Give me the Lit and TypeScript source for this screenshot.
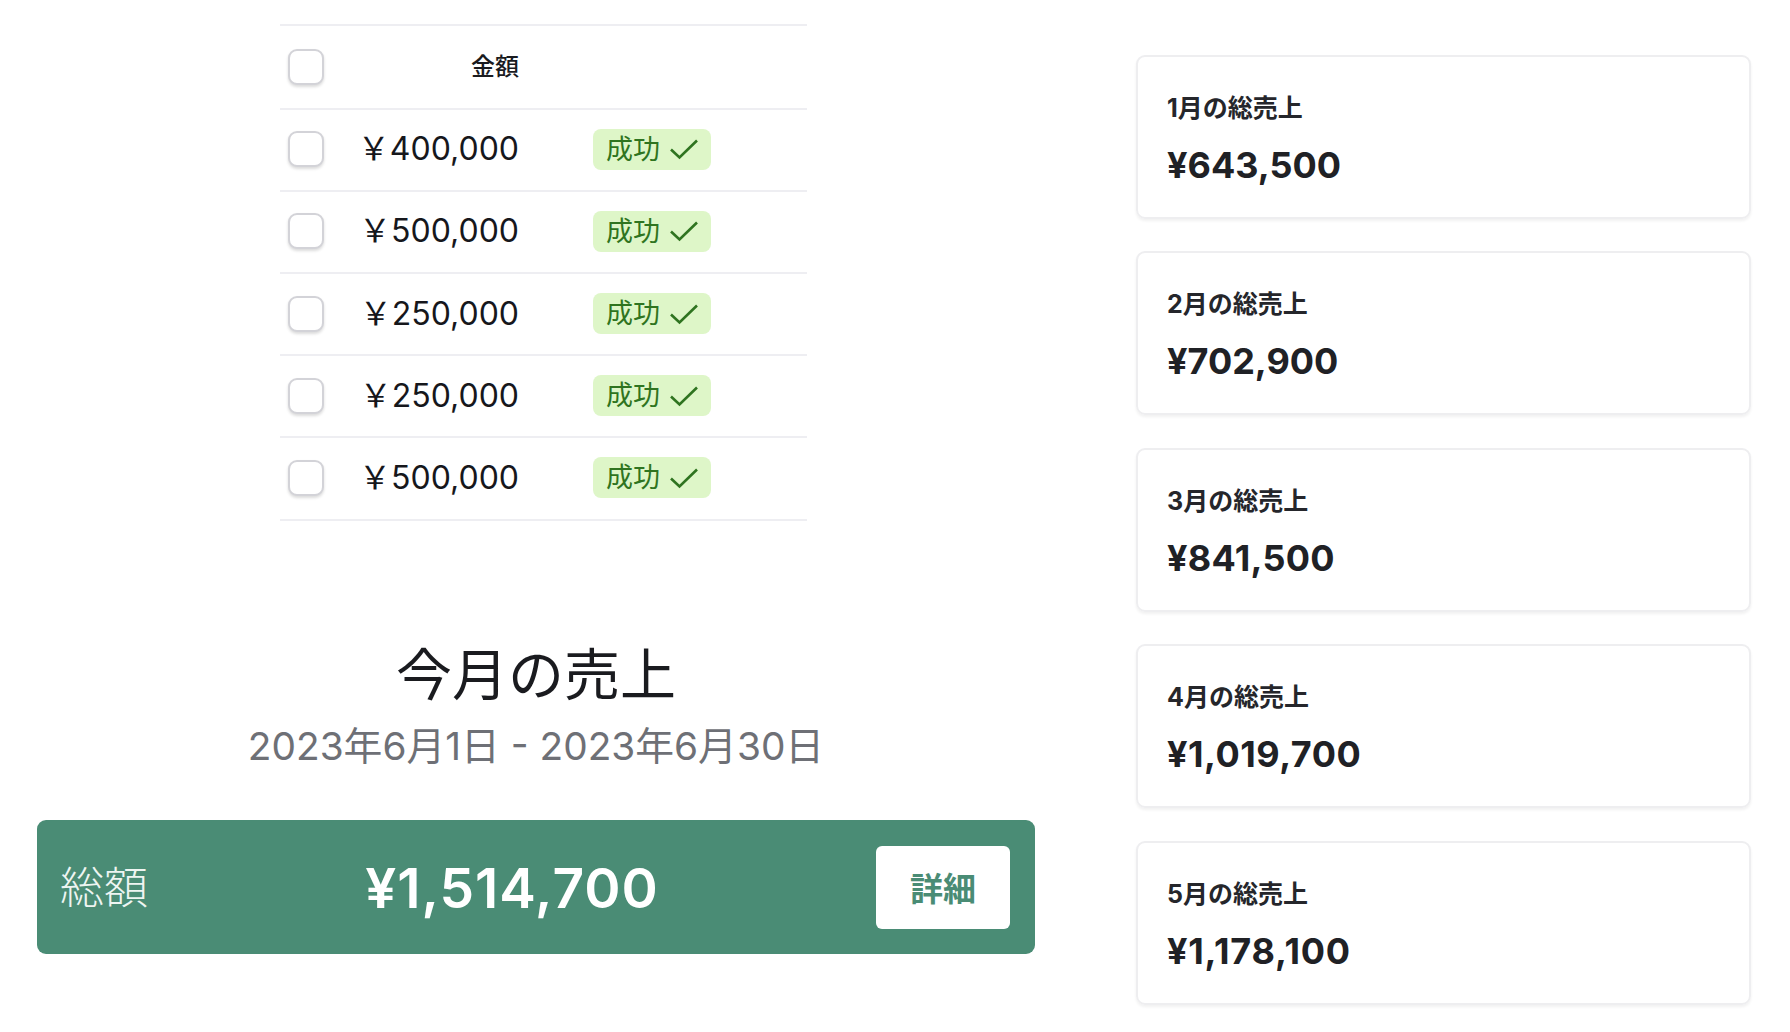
import { LitElement, html, css } from "lit";
import { customElement } from "lit/decorators.js";
import { styleMap } from "lit/directives/style-map.js";

const rows = ["400,000", "500,000", "250,000", "250,000", "500,000"];
const cards = [
  ["1月の総売上", "¥643,500"],
  ["2月の総売上", "¥702,900"],
  ["3月の総売上", "¥841,500"],
  ["4月の総売上", "¥1,019,700"],
  ["5月の総売上", "¥1,178,100"],
];

/* The reference's "1" is wider than Inter's, so values with more 1s get a little tracking. */
const tracking = (v: string) => `${(v.split("1").length - 1) * 0.25}px`;

@customElement("app-root")
export class AppRoot extends LitElement {
  static styles = css`
    :host {
      display: block;
      width: 1790px;
      height: 1032px;
      overflow: hidden;
      background: #fff;
      color: #1a1b1f;
      font-family: Inter, "Noto Sans CJK JP", sans-serif;
    }
    .page {
      display: flex;
      align-items: flex-start;
      padding-left: 37px;
    }
    .left {
      width: 998px;
      padding-top: 24px;
      display: flex;
      flex-direction: column;
    }
    .table {
      width: 527px;
      margin-left: 243px;
      border-top: 2px solid #eeeef2;
      display: flex;
      flex-direction: column;
    }
    .row {
      display: grid;
      grid-template-columns: 239px 1fr;
      height: 79.2px;
      padding-bottom: 1px;
      align-items: center;
      border-bottom: 2px solid #eeeef2;
    }
    .row.head {
      height: 81.6px;
      padding-bottom: 0;
    }
    .cellA {
      display: flex;
      align-items: center;
      justify-content: space-between;
      padding-left: 8px;
    }
    .check {
      width: 32px;
      height: 32px;
      border: 2px solid #d3d3d8;
      border-radius: 9px;
      background: #fff;
      box-shadow: 0 2px 3px rgba(0, 0, 0, 0.14);
    }
    .amount {
      font-size: 32px;
      line-height: 1;
      color: #16171c;
    }
    .headLabel {
      font-size: 24px;
      font-weight: 500;
      line-height: 1;
    }
    .badge {
      margin-left: 74px;
      width: 118px;
      height: 41px;
      box-sizing: border-box;
      border-radius: 8px;
      background: #def6c8;
      color: #2f7420;
      display: flex;
      align-items: center;
      gap: 9px;
      padding-left: 13px;
      font-size: 27px;
      line-height: 1;
      justify-self: start;
    }
    .badge svg {
      width: 30px;
      height: 24px;
      flex: none;
    }
    .title {
      margin: 114.6px 0 0;
      text-align: center;
      font-size: 56px;
      font-weight: 400;
      line-height: 80px;
    }
    .date {
      text-align: center;
      font-size: 38.8px;
      line-height: 56px;
      color: #6e7076;
      margin-top: 3px;
    }
    .bar {
      margin-top: 46px;
      height: 134px;
      box-sizing: border-box;
      border-radius: 9px;
      background: #4a8c75;
      color: #fff;
      display: flex;
      align-items: center;
      justify-content: space-between;
      padding: 0 25px 0 23px;
    }
    .barLabel {
      font-size: 44px;
      font-weight: 300;
      line-height: 1;
      color: #eef5f2;
      margin-top: 2px;
    }
    .barValue {
      font-size: 55px;
      font-weight: 600;
      line-height: 1;
      letter-spacing: 1px;
      margin-top: 2px;
    }
    .detail {
      width: 134px;
      height: 83px;
      border: none;
      border-radius: 6px;
      background: #fff;
      color: #4a8c75;
      font-family: inherit;
      font-size: 33px;
      font-weight: 700;
      padding: 0;
    }
    .right {
      margin-left: 101px;
      width: 615px;
      padding-top: 55px;
      display: flex;
      flex-direction: column;
      gap: 32.4px;
    }
    .card {
      height: 164px;
      box-sizing: border-box;
      border: 2px solid #eeeef0;
      border-radius: 9px;
      box-shadow: 0 2px 3px rgba(0, 0, 0, 0.06);
      padding: 33px 29px 0;
      display: flex;
      flex-direction: column;
    }
    .cardLabel {
      font-size: 25px;
      font-weight: 700;
      line-height: 36px;
      color: #25262b;
    }
    .cardValue {
      margin-top: 20px;
      font-size: 36px;
      font-weight: 700;
      line-height: 38px;
      color: #202125;
    }
  `;

  render() {
    return html`
      <div class="page">
        <div class="left">
          <div class="table">
            <div class="row head">
              <div class="cellA">
                <div class="check"></div>
                <div class="headLabel">金額</div>
              </div>
            </div>
            ${rows.map(
              (r) => html`
                <div class="row">
                  <div class="cellA">
                    <div class="check"></div>
                    <div class="amount">￥${r}</div>
                  </div>
                  <div class="badge">
                    成功
                    <svg viewBox="0 0 30 24" fill="none" stroke="#2f7420" stroke-width="2.6">
                      <path d="M2 12.5 L10.5 20.5 L28 3.5" />
                    </svg>
                  </div>
                </div>
              `
            )}
          </div>
          <h1 class="title">今月の売上</h1>
          <div class="date">2023年6月1日 - 2023年6月30日</div>
          <div class="bar">
            <div class="barLabel">総額</div>
            <div class="barValue">¥1,514,700</div>
            <button class="detail">詳細</button>
          </div>
        </div>
        <div class="right">
          ${cards.map(
            ([l, v]) => html`
              <div class="card">
                <div class="cardLabel">${l}</div>
                <div class="cardValue" style=${styleMap({ letterSpacing: tracking(v) })}>${v}</div>
              </div>
            `
          )}
        </div>
      </div>
    `;
  }
}
